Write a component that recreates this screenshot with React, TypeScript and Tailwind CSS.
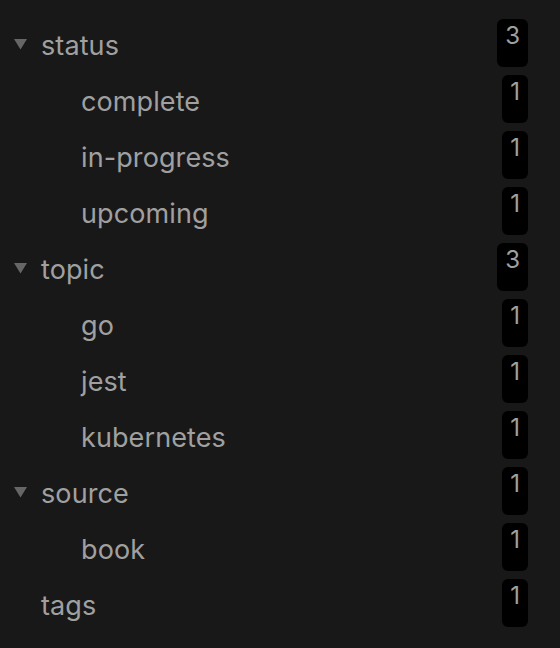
const tree = [
  { name: 'status', count: 3, children: [
    { name: 'complete', count: 1 },
    { name: 'in-progress', count: 1 },
    { name: 'upcoming', count: 1 },
  ] },
  { name: 'topic', count: 3, children: [
    { name: 'go', count: 1 },
    { name: 'jest', count: 1 },
    { name: 'kubernetes', count: 1 },
  ] },
  { name: 'source', count: 1, children: [
    { name: 'book', count: 1 },
  ] },
  { name: 'tags', count: 1, children: [] },
]

function Count({ n }: { n: number }) {
  return (
    <div className="h-[48px] self-start mt-[3px] rounded-[6px] bg-black px-[8px] pt-[5px] text-[24px] leading-[24px] text-[#a0a0a0]">
      {n}
    </div>
  )
}

function Row({ name, count, depth, open }: { name: string; count: number; depth: number; open?: boolean }) {
  return (
    <div className="flex h-[56px] items-start pr-[32px]">
      <div className="flex h-[56px] flex-1 items-center">
        <div className={depth ? 'w-[81px] shrink-0' : 'w-[41px] shrink-0 flex items-center pl-[13px]'}>
          {open && (
            <svg width="15" height="12" viewBox="0 0 15 12">
              <path d="M1 1 H14 L7.5 11.5 Z" fill="#666666" />
            </svg>
          )}
        </div>
        <span className="pt-[3px] text-[27px] leading-[53px] tracking-[0.1px] text-[#a0a0a0]">{name}</span>
      </div>
      <Count n={count} />
    </div>
  )
}

export default function App() {
  return (
    <div className="min-h-[648px] w-[560px] bg-[#181818] pt-[16px]" style={{ fontFamily: 'Inter, "Noto Sans", sans-serif' }}>
      {tree.map((t) => (
        <div key={t.name}>
          <Row name={t.name} count={t.count} depth={0} open={t.children.length > 0} />
          {t.children.map((c) => (
            <Row key={c.name} name={c.name} count={c.count} depth={1} />
          ))}
        </div>
      ))}
    </div>
  )
}
